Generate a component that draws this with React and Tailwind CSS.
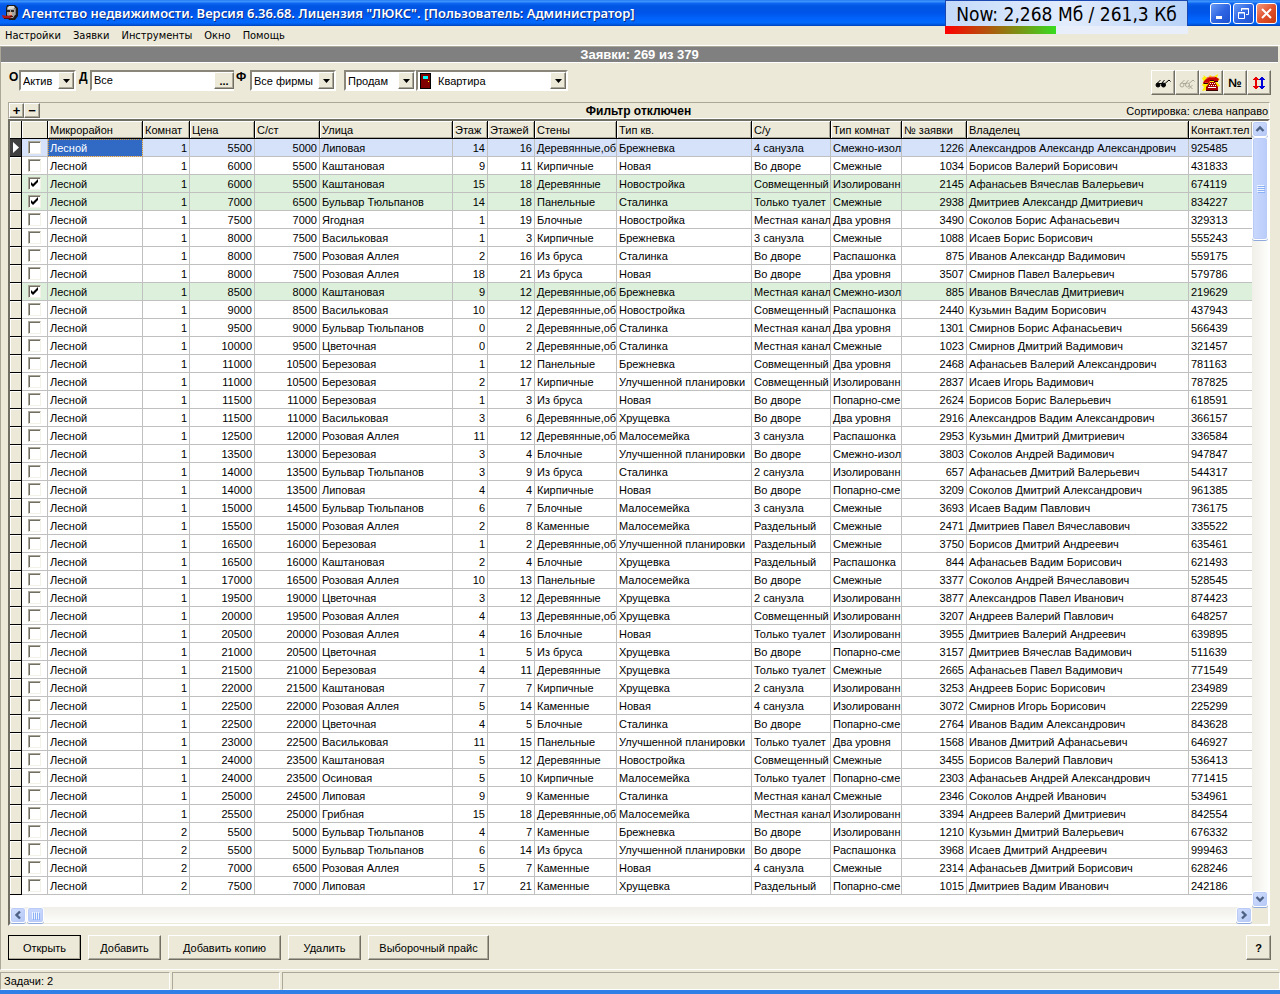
import React, { useState } from 'react';
import clsx from 'clsx';

const COLUMNS = [
  { title: 'Микрорайон', width: 'w-[95px]' },
  { title: 'Комнат', width: 'w-[47px]', numeric: true },
  { title: 'Цена', width: 'w-[65px]', numeric: true },
  { title: 'С/ст', width: 'w-[65px]', numeric: true },
  { title: 'Улица', width: 'w-[133px]' },
  { title: 'Этаж', width: 'w-[35px]', numeric: true },
  { title: 'Этажей', width: 'w-[47px]', numeric: true },
  { title: 'Стены', width: 'w-[82px]' },
  { title: 'Тип кв.', width: 'w-[135px]' },
  { title: 'С/у', width: 'w-[79px]' },
  { title: 'Тип комнат', width: 'w-[71px]' },
  { title: '№ заявки', width: 'w-[65px]', numeric: true },
  { title: 'Владелец', width: 'w-[222px]' },
  { title: 'Контакт.тел', width: '' },
];

const ROWS = `1|5500|5000|Липовая|14|16|Деревянные,об|Брежневка|4 санузла|Смежно-изол|1226|Александров Александр Александрович|925485
1|6000|5500|Каштановая|9|11|Кирпичные|Новая|Во дворе|Смежные|1034|Борисов Валерий Борисович|431833
1|6000|5500|Каштановая|15|18|Деревянные|Новостройка|Совмещенный|Изолированн|2145|Афанасьев Вячеслав Валерьевич|674119
1|7000|6500|Бульвар Тюльпанов|14|18|Панельные|Сталинка|Только туалет|Смежные|2938|Дмитриев Александр Дмитриевич|834227
1|7500|7000|Ягодная|1|19|Блочные|Новостройка|Местная канал|Два уровня|3490|Соколов Борис Афанасьевич|329313
1|8000|7500|Васильковая|1|3|Кирпичные|Брежневка|3 санузла|Смежные|1088|Исаев Борис Борисович|555243
1|8000|7500|Розовая Аллея|2|16|Из бруса|Сталинка|Во дворе|Распашонка|875|Иванов Александр Вадимович|559175
1|8000|7500|Розовая Аллея|18|21|Из бруса|Новая|Во дворе|Два уровня|3507|Смирнов Павел Валерьевич|579786
1|8500|8000|Каштановая|9|12|Деревянные,об|Брежневка|Местная канал|Смежно-изол|885|Иванов Вячеслав Дмитриевич|219629
1|9000|8500|Васильковая|10|12|Деревянные,об|Новостройка|Совмещенный|Распашонка|2440|Кузьмин Вадим Борисович|437943
1|9500|9000|Бульвар Тюльпанов|0|2|Деревянные,об|Сталинка|Местная канал|Два уровня|1301|Смирнов Борис Афанасьевич|566439
1|10000|9500|Цветочная|0|2|Деревянные,об|Сталинка|Местная канал|Смежные|1023|Смирнов Дмитрий Вадимович|321457
1|11000|10500|Березовая|1|12|Панельные|Брежневка|Совмещенный|Два уровня|2468|Афанасьев Валерий Александрович|781163
1|11000|10500|Березовая|2|17|Кирпичные|Улучшенной планировки|Совмещенный|Изолированн|2837|Исаев Игорь Вадимович|787825
1|11500|11000|Березовая|1|3|Из бруса|Новая|Во дворе|Попарно-сме|2624|Борисов Борис Валерьевич|618591
1|11500|11000|Васильковая|3|6|Деревянные,об|Хрущевка|Во дворе|Два уровня|2916|Александров Вадим Александрович|366157
1|12500|12000|Розовая Аллея|11|12|Деревянные,об|Малосемейка|3 санузла|Распашонка|2953|Кузьмин Дмитрий Дмитриевич|336584
1|13500|13000|Березовая|3|4|Блочные|Улучшенной планировки|Во дворе|Смежно-изол|3803|Соколов Андрей Вадимович|947847
1|14000|13500|Бульвар Тюльпанов|3|9|Из бруса|Сталинка|2 санузла|Изолированн|657|Афанасьев Дмитрий Валерьевич|544317
1|14000|13500|Липовая|4|4|Кирпичные|Новая|Во дворе|Попарно-сме|3209|Соколов Дмитрий Александрович|961385
1|15000|14500|Бульвар Тюльпанов|6|7|Блочные|Малосемейка|3 санузла|Смежные|3693|Исаев Вадим Павлович|736175
1|15500|15000|Розовая Аллея|2|8|Каменные|Малосемейка|Раздельный|Смежные|2471|Дмитриев Павел Вячеславович|335522
1|16500|16000|Березовая|1|2|Деревянные,об|Улучшенной планировки|Раздельный|Смежные|3750|Борисов Дмитрий Андреевич|635461
1|16500|16000|Каштановая|2|4|Блочные|Хрущевка|Раздельный|Распашонка|844|Афанасьев Вадим Борисович|621493
1|17000|16500|Розовая Аллея|10|13|Панельные|Малосемейка|Во дворе|Смежные|3377|Соколов Андрей Вячеславович|528545
1|19500|19000|Цветочная|3|12|Деревянные|Хрущевка|2 санузла|Изолированн|3877|Александров Павел Иванович|874423
1|20000|19500|Розовая Аллея|4|13|Деревянные,об|Хрущевка|Совмещенный|Изолированн|3207|Андреев Валерий Павлович|648257
1|20500|20000|Розовая Аллея|4|16|Блочные|Новая|Только туалет|Изолированн|3955|Дмитриев Валерий Андреевич|639895
1|21000|20500|Цветочная|1|5|Из бруса|Хрущевка|Во дворе|Попарно-сме|3157|Дмитриев Вячеслав Вадимович|511639
1|21500|21000|Березовая|4|11|Деревянные|Хрущевка|Только туалет|Смежные|2665|Афанасьев Павел Вадимович|771549
1|22000|21500|Каштановая|7|7|Кирпичные|Хрущевка|2 санузла|Изолированн|3253|Андреев Борис Борисович|234989
1|22500|22000|Розовая Аллея|5|14|Каменные|Новая|4 санузла|Изолированн|3072|Смирнов Игорь Борисович|225299
1|22500|22000|Цветочная|4|5|Блочные|Сталинка|Во дворе|Попарно-сме|2764|Иванов Вадим Александрович|843628
1|23000|22500|Васильковая|11|15|Панельные|Улучшенной планировки|Только туалет|Два уровня|1568|Иванов Дмитрий Афанасьевич|646927
1|24000|23500|Каштановая|5|12|Деревянные|Новостройка|Совмещенный|Смежные|3455|Борисов Валерий Павлович|536413
1|24000|23500|Осиновая|5|10|Кирпичные|Малосемейка|Только туалет|Попарно-сме|2303|Афанасьев Андрей Александрович|771415
1|25000|24500|Липовая|9|9|Каменные|Сталинка|Местная канал|Смежные|2346|Соколов Андрей Иванович|534961
1|25500|25000|Грибная|15|18|Деревянные,об|Малосемейка|Местная канал|Изолированн|3394|Андреев Валерий Дмитриевич|842554
2|5500|5000|Бульвар Тюльпанов|4|7|Каменные|Брежневка|Во дворе|Изолированн|1210|Кузьмин Дмитрий Валерьевич|676332
2|5500|5000|Бульвар Тюльпанов|6|14|Из бруса|Улучшенной планировки|Во дворе|Распашонка|3968|Исаев Дмитрий Андреевич|999463
2|7000|6500|Розовая Аллея|5|7|Каменные|Новая|4 санузла|Смежные|2314|Афанасьев Дмитрий Борисович|628246
2|7500|7000|Липовая|17|21|Каменные|Хрущевка|Раздельный|Попарно-сме|1015|Дмитриев Вадим Иванович|242186`
  .split('\n')
  .map((line) => ['Лесной', ...line.split('|')]);

const RAISED =
  'border border-t-white border-l-white border-b-[#716f64] border-r-[#716f64] bg-[#ece9d8] shadow-[inset_-1px_-1px_0_#aca899]';
const SUNKEN =
  'border-2 border-t-[#8a877a] border-l-[#8a877a] border-b-white border-r-white bg-white';

function AppIcon() {
  return (
    <svg viewBox="0 0 16 16" className="h-4 w-4" aria-hidden="true">
      <path d="M5 0h8l3 3v8l-3 4H7l-3-4V3z" fill="#1c1a1a" />
      <path d="M6 2h5l2 2v6l-2 3H7L5 10V5z" fill="#a5a5a2" />
      <path d="M5 3l2-2h5l1 2-3 1H6z" fill="#deded9" />
      <path d="M5 5h3v2H5zM9 5h3v2H9z" fill="#2d2826" />
      <path d="M13 3h1v7h-1z" fill="#7d7a75" />
      <path d="M7 7h3v3H7z" fill="#e2b18d" />
      <path d="M0 10l5 1 5-1v2l-4 2-5-1z" fill="#b3181a" />
      <path d="M2 13h7v1H2zM8 11h3v1H8z" fill="#4b120c" />
    </svg>
  );
}

function GlassesIcon({ muted }) {
  const c = muted ? '#aca899' : '#000000';
  return (
    <svg viewBox="0 0 18 16" className="h-4 w-[18px]" aria-hidden="true" fill="none" stroke={c}>
      <path d="M3 8.500L6.500 5M7.500 8.500L10.500 5M11 8.500L15 5l1.500 1.500" />
      <circle cx="4" cy="10" r="2" fill={muted ? 'none' : c} />
      <circle cx="9.500" cy="10" r="2" fill={muted ? 'none' : c} />
      <path d="M5 8.500h3" />
      {muted && <path d="M10.500 10l4 4M14.500 10l-4 4" />}
    </svg>
  );
}

function PhoneIcon() {
  return (
    <svg viewBox="0 0 18 18" className="h-[18px] w-[18px]" aria-hidden="true">
      <path d="M1 1l5 3 2-3 3 2 5-3-1 4 3 1-3 3 3 4-3 1v4l-4-1-3 1-3-1-5 1 2-4-2-2 2-3-2-4 2-1z" fill="#ffee00" />
      <path d="M2 7l4-4h8l3 2-1 2h-4V6H8v1L6 10H3L1 9z" fill="#c80000" />
      <path d="M4 5l3-2h6M3 9h3" fill="none" stroke="#ff6a4a" strokeWidth="1" />
      <path d="M1 9h5v1H2zM8 6h4v1H8zM16 7h-4v1h4z" fill="#3a0000" />
      <path d="M8 8h5l3 5v4H4v-4z" fill="#a80000" />
      <path d="M8 9h1v1H8zM10 9h1v1h-1zM12 9h1v1h-1zM7 11h1v1H7zM9 11h1v1H9zM11 11h1v1h-1zM13 11h1v1h-1zM6 13h8v1H6z" fill="#ffffff" />
      <path d="M4 16h12v1H4z" fill="#3a0000" />
    </svg>
  );
}

function SortIcon() {
  return (
    <svg viewBox="0 0 14 16" className="h-4 w-[14px]" aria-hidden="true" shapeRendering="crispEdges">
      <path d="M3 2h2v12H3zM2 3h4v2H2zM2 11h4v2H2zM1 4h1v1H1zM6 4h1v1H6zM1 11h1v1H1zM6 11h1v1H6z" fill="#e80000" />
      <path d="M9 2h2v12H9zM8 3h4v2H8zM8 11h4v2H8zM7 4h1v1H7zM12 4h1v1h-1zM7 11h1v1H7zM12 11h1v1h-1z" fill="#0000d8" />
    </svg>
  );
}

function Chevron({ d }) {
  return (
    <svg viewBox="0 0 10 10" className="h-[10px] w-[10px]" aria-hidden="true">
      <path d={d} fill="none" stroke="#4d6185" strokeWidth="2.4" />
    </svg>
  );
}

function ScrollButton({ label, d }) {
  return (
    <button
      type="button"
      aria-label={label}
      className="flex h-4 w-4 shrink-0 items-center justify-center rounded-[3px] border border-white bg-linear-to-br from-[#d3dffd] to-[#b4c8f6] shadow-[inset_0_0_0_1px_#b9cbf6,0_1px_0_#8fa9dc]"
    >
      <Chevron d={d} />
    </button>
  );
}

function Combo({ id, label, value, width, icon }) {
  return (
    <div className={clsx('grid h-[21px] shrink-0 grid-cols-1 items-stretch', SUNKEN, width)}>
      <select
        id={id}
        aria-label={label}
        defaultValue={value}
        className={clsx(
          'col-start-1 row-start-1 min-w-0 appearance-none bg-transparent pr-4 outline-none',
          icon ? 'pl-5' : 'pl-[2px]'
        )}
      >
        <option>{value}</option>
      </select>
      <span className="pointer-events-none col-start-1 row-start-1 flex items-stretch justify-between">
        <span className="flex items-center pl-[2px]">{icon}</span>
        <span className={clsx('flex w-4 items-center justify-center', RAISED)}>
          <svg viewBox="0 0 7 4" className="h-1 w-[7px]" aria-hidden="true">
            <path d="M0 0h7L3.5 4z" fill="#000" />
          </svg>
        </span>
      </span>
    </div>
  );
}

function DoorIcon() {
  return (
    <svg viewBox="0 0 11 16" className="h-4 w-[11px]" aria-hidden="true" shapeRendering="crispEdges">
      <path d="M0 0h11v16H0z" fill="#000" />
      <path d="M1 1h9v14H1z" fill="#800000" />
      <path d="M3 3h5v3H3z" fill="#00ffff" />
      <path d="M8 8h1v1H8z" fill="#ffff00" />
    </svg>
  );
}

function TitleButton({ label, close, children }) {
  return (
    <button
      type="button"
      aria-label={label}
      className={clsx(
        'flex h-[21px] w-[21px] items-center justify-center rounded-[3px] border border-white',
        close
          ? 'bg-linear-to-br from-[#f0977c] via-[#e0512c] to-[#c83a10]'
          : 'bg-linear-to-br from-[#6a9bf5] via-[#2f66e3] to-[#1c50cf]'
      )}
    >
      <svg viewBox="0 0 15 15" className="h-[15px] w-[15px]" aria-hidden="true" fill="none" stroke="#fff">
        {children}
      </svg>
    </button>
  );
}

function TitleBar() {
  return (
    <header className="relative flex h-[26px] items-center justify-between bg-[linear-gradient(#2a7df0_0%,#3a93ff_6%,#0a62ee_14%,#0055e3_26%,#0055ea_50%,#0062fa_70%,#026afe_86%,#0058e0_94%,#0042b8_100%)] pr-[3px] pl-[2px]">
      <div className="flex items-center gap-1">
        <AppIcon />
        <h1 className="font-['Noto_Sans',sans-serif] text-[13px] leading-[18px] font-semibold whitespace-nowrap text-white [text-shadow:1px_1px_0_#0a2a80]">
          Агентство недвижимости. Версия 6.36.68. Лицензия "ЛЮКС". [Пользователь: Администратор]
        </h1>
      </div>
      <div className="flex gap-[2px]">
        <TitleButton label="Свернуть">
          <path d="M3 11.5h6" strokeWidth="3" />
        </TitleButton>
        <TitleButton label="Восстановить">
          <path d="M5.500 5V2.500h7v6H10M5 3h8" />
          <path d="M2.500 6.500h6v6h-6zM2 7h7" />
        </TitleButton>
        <TitleButton label="Закрыть" close>
          <path d="M3 3l9 9M12 3l-9 9" strokeWidth="2" />
        </TitleButton>
      </div>
      <div className="absolute top-0 right-[92px] z-10 w-[243px]">
        <div className="h-[26px] border-x border-t border-[#1a48b0] bg-linear-to-r from-[#c4dafa] via-[#e2ecfc] to-[#b8d2f8] text-center font-['DejaVu_Sans_Condensed','DejaVu_Sans',sans-serif] text-[19px] leading-[26px] whitespace-nowrap text-black">
          Now: 2,268 Мб / 261,3 Кб
        </div>
        <div className="h-2 bg-[#e9eefb]">
          <div className="h-2 w-[111px] bg-[linear-gradient(90deg,#ff0000,#38dc20)]" />
        </div>
      </div>
    </header>
  );
}

function ToolButton({ label, children }) {
  return (
    <button type="button" aria-label={label} className={clsx('flex h-[25px] w-6 items-center justify-center', RAISED)}>
      {children}
    </button>
  );
}

function Toolbar() {
  return (
    <div className="flex items-start justify-between pt-[7px] pr-[7px] pl-2">
      <div className="flex items-start">
        <label htmlFor="state" className="w-[10px] text-[12px] leading-[14px] font-bold">О</label>
        <Combo id="state" value="Актив" width="w-[57px]" />
        <label htmlFor="district" className="w-[14px] pl-[3px] text-[12px] leading-[14px] font-bold">Д</label>
        <div className={clsx('flex h-[21px] w-[144px]', SUNKEN, 'border-r-0')}>
          <input id="district" defaultValue="Все" className="min-w-0 flex-1 pb-[2px] pl-[2px] outline-none" />
          <button type="button" aria-label="Выбрать район" className={clsx('w-5 leading-[14px] font-bold', RAISED)}>...</button>
        </div>
        <label htmlFor="firm" className="w-4 pl-[2px] text-[12px] leading-[14px] font-bold">Ф</label>
        <Combo id="firm" value="Все фирмы" width="w-[86px]" />
        <div className="flex pl-2">
          <Combo id="deal" label="Вид сделки" value="Продам" width="w-[72px]" />
          <Combo id="object" label="Объект" value="Квартира" width="w-[152px]" icon={<DoorIcon />} />
        </div>
      </div>
      <div className="flex">
        <ToolButton label="Поиск"><GlassesIcon /></ToolButton>
        <ToolButton label="Отменить поиск"><GlassesIcon muted /></ToolButton>
        <ToolButton label="Телефон"><PhoneIcon /></ToolButton>
        <ToolButton label="Номер заявки"><span className="text-[12px] font-bold">№</span></ToolButton>
        <ToolButton label="Сортировка"><SortIcon /></ToolButton>
      </div>
    </div>
  );
}

function RowCheck({ number, checked, onChange }) {
  return (
    <span className="grid h-[13px] w-[13px]">
      <input
        type="checkbox"
        aria-label={`Отметить заявку ${number}`}
        checked={checked}
        onChange={onChange}
        className="col-start-1 row-start-1 h-[13px] w-[13px] appearance-none border border-t-[#aca899] border-r-[#f4f2e8] border-b-[#f4f2e8] border-l-[#aca899] bg-white shadow-[inset_1px_1px_0_#716f64]"
      />
      {checked && (
        <svg viewBox="0 0 13 13" className="pointer-events-none col-start-1 row-start-1 h-[13px] w-[13px]" aria-hidden="true">
          <path d="M3 5v3l2 2 5-5V2L5 7z" fill="#000" />
        </svg>
      )}
    </span>
  );
}

function Grid() {
  const [marked, setMarked] = useState([2, 3, 8]);
  const toggle = (i) => setMarked((m) => (m.includes(i) ? m.filter((x) => x !== i) : [...m, i]));
  return (
    <table className="w-full table-fixed border-separate border-spacing-0">
      <colgroup>
        <col className="w-3" />
        <col className="w-[26px]" />
        {COLUMNS.map((c) => <col key={c.title} className={c.width} />)}
      </colgroup>
      <thead>
        <tr className="bg-[#ece9d8]">
          <th aria-label="Текущая" className="h-[18px] border-r border-b border-black p-0 shadow-[inset_1px_1px_0_#fff]" />
          <th aria-label="Отметка" className="h-[18px] border-r border-b border-black p-0 shadow-[inset_1px_1px_0_#fff]" />
          {COLUMNS.map((c) => (
            <th
              key={c.title}
              className="h-[18px] overflow-hidden border-r border-b border-black p-0 pt-[2px] pl-[2px] text-left leading-[15px] font-normal whitespace-nowrap shadow-[inset_1px_1px_0_#fff,inset_-1px_-1px_0_#aca899] last:border-r-0"
            >
              {c.title}
            </th>
          ))}
        </tr>
      </thead>
      <tbody>
        {ROWS.map((row, i) => {
          const isMarked = marked.includes(i);
          return (
            <tr key={row[11]} className={clsx(i === 0 ? 'bg-[#d5e2f9]' : isMarked ? 'bg-[#ddf0dc]' : 'bg-white')}>
              <td
                className={clsx(
                  'h-[18px] border-r border-b border-black p-0',
                  i === 0 ? 'bg-[#404040]' : 'bg-[#ece9d8] shadow-[inset_1px_1px_0_#fff]'
                )}
              >
                {i === 0 && (
                  <svg viewBox="0 0 11 11" className="h-[11px] w-[11px]" aria-hidden="true">
                    <path d="M3 0v11l6-5.500z" fill="#fff" />
                  </svg>
                )}
              </td>
              <td className="h-[18px] border-r border-b border-[#c0c0c0] p-0 pl-[6px]">
                <RowCheck number={row[11]} checked={isMarked} onChange={() => toggle(i)} />
              </td>
              {row.map((value, j) => (
                <td
                  key={j}
                  className={clsx(
                    'h-[18px] overflow-hidden border-r border-b border-[#c0c0c0] p-0 px-[2px] pt-[2px] leading-[15px] whitespace-nowrap last:border-r-0',
                    COLUMNS[j].numeric && 'text-right',
                    i === 0 && j === 0 && 'bg-[#316ac5] text-white outline-1 -outline-offset-1 outline-[#ce953a] outline-dotted'
                  )}
                >
                  {value}
                </td>
              ))}
            </tr>
          );
        })}
      </tbody>
    </table>
  );
}

function GridPanel() {
  return (
    <div className="flex flex-1 flex-col border-2 border-t-[#716f64] border-r-white border-b-white border-l-[#716f64] bg-[#ece9d8] pb-px">
      <div className="flex flex-1">
        <div className="min-w-0 flex-1 overflow-hidden bg-white">
          <Grid />
        </div>
        <div className="flex w-4 flex-col bg-linear-to-r from-[#f0efe8] to-[#fdfdfb]">
          <ScrollButton label="Вверх" d="M1.500 7l3.500-3.500L8.500 7" />
          <div className="flex h-[103px] items-center justify-center rounded-[3px] border border-white bg-linear-to-r from-[#c9d8fc] to-[#b9ccfa] shadow-[inset_0_0_0_1px_#b9cbf6,0_1px_0_#8fa9dc]">
            <div className="flex flex-col gap-px">
              {[0, 1, 2, 3].map((n) => <div key={n} className="h-px w-[7px] bg-[#eef4fe] shadow-[1px_1px_0_#8cb0f8]" />)}
            </div>
          </div>
          <div className="flex-1" />
          <ScrollButton label="Вниз" d="M1.500 3l3.500 3.500L8.500 3" />
        </div>
      </div>
      <div className="flex">
        <div className="flex flex-1 gap-px bg-linear-to-b from-[#f0efe8] to-[#fdfdfb]">
          <ScrollButton label="Влево" d="M7 1.500L3.500 5L7 8.500" />
          <div className="flex h-4 w-[17px] items-center justify-center gap-px rounded-[3px] border border-white bg-linear-to-b from-[#c9d8fc] to-[#b9ccfa] shadow-[inset_0_0_0_1px_#b9cbf6,0_1px_0_#8fa9dc]">
            {[0, 1, 2, 3].map((n) => <div key={n} className="h-[7px] w-px bg-[#eef4fe] shadow-[1px_1px_0_#8cb0f8]" />)}
          </div>
          <div className="flex-1" />
          <ScrollButton label="Вправо" d="M3 1.500L6.500 5L3 8.500" />
        </div>
        <div className="w-4" />
      </div>
    </div>
  );
}

function PushButton({ width, primary, children }) {
  return (
    <button
      type="button"
      className={clsx(
        'h-[25px] shrink-0 text-center whitespace-nowrap',
        RAISED,
        primary && 'outline-1 -outline-offset-1 outline-black',
        width
      )}
    >
      {children}
    </button>
  );
}

export default function App() {
  return (
    <div className="flex min-h-screen flex-col bg-[#ece9d8] font-['Liberation_Sans',Arial,sans-serif] text-[11px] leading-[14px] text-black">
      <TitleBar />
      <nav className="flex h-5 items-center gap-3 border-b border-white pl-[5px] font-['DejaVu_Sans_Condensed','DejaVu_Sans',sans-serif] text-[11px]">
        {['Настройки', 'Заявки', 'Инструменты', 'Окно', 'Помощь'].map((item) => (
          <a key={item} href="#menu">{item}</a>
        ))}
      </nav>
      <main className="mr-[2px] flex flex-1 flex-col border-b border-l border-b-white border-l-[#aca899]">
        <h2 className="h-[17px] border-t border-b border-t-[#aca899] border-b-white bg-[#808080] text-center text-[13px] leading-[16px] font-bold text-white">
          Заявки: 269 из 379
        </h2>
        <Toolbar />
        <div className="mt-[7px] mr-[8px] ml-[7px] flex h-[17px] items-center border border-t-[#aca899] border-r-white border-b-white border-l-[#aca899]">
          <div className="flex flex-1">
            <button type="button" aria-label="Добавить фильтр" className={clsx('h-[15px] w-[15px] text-[13px] leading-[12px] font-bold', RAISED)}>+</button>
            <button type="button" aria-label="Убрать фильтр" className={clsx('h-[15px] w-4 text-[13px] leading-[12px] font-bold', RAISED)}>−</button>
          </div>
          <strong className="text-[12px]">Фильтр отключен</strong>
          <span className="flex-1 pr-px text-right">Сортировка: слева направо</span>
        </div>
        <div className="mr-[8px] ml-[7px] flex flex-1 flex-col">
          <GridPanel />
        </div>
        <div className="flex justify-between py-[9px] pr-[7px] pl-[7px]">
          <div className="flex gap-[7px]">
            <PushButton width="w-[73px]" primary>Открыть</PushButton>
            <PushButton width="w-[73px]">Добавить</PushButton>
            <PushButton width="w-[113px]">Добавить копию</PushButton>
            <PushButton width="w-[73px]">Удалить</PushButton>
            <PushButton width="w-[121px]">Выборочный прайс</PushButton>
          </div>
          <PushButton width="w-[25px]"><b>?</b></PushButton>
        </div>
      </main>
      <footer className="flex h-[20px] gap-[2px] pt-[2px]">
        <div className="w-[170px] border border-t-[#aca899] border-r-white border-b-white border-l-[#aca899] pl-[3px] leading-[17px]">Задачи: 2</div>
        <div className="w-[108px] border border-t-[#aca899] border-r-white border-b-white border-l-[#aca899]" />
        <div className="flex-1 border border-t-[#aca899] border-r-white border-b-white border-l-[#aca899]" />
      </footer>
      <div className="h-1 bg-[#2f7fe6]" />
    </div>
  );
}
